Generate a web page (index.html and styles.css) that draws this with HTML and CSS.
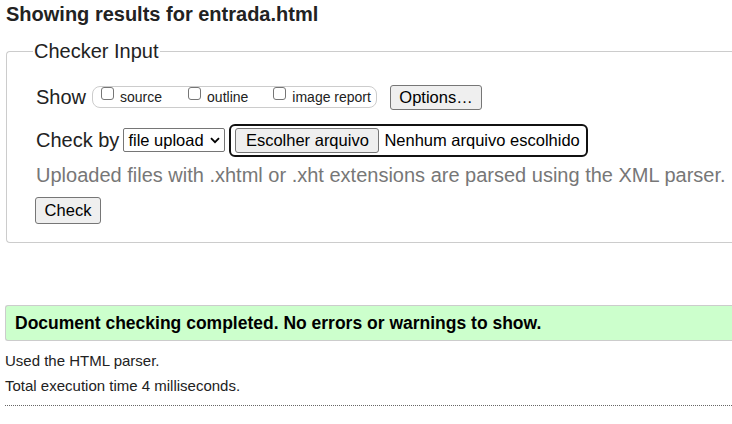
FILE: index.html
```html
<!DOCTYPE html>
<html lang="en">
<head>
<meta charset="utf-8">
<title>Showing results for entrada.html</title>
<link rel="stylesheet" href="styles.css">
</head>
<body>
<h2 class="title">Showing results for entrada.html</h2>
<fieldset class="checker">
  <legend class="legend">Checker Input</legend>
  <div class="row show-row">
    <span class="row-label">Show</span>
    <span class="opts">
      <label class="opt"><span class="cb"></span>source</label>
      <label class="opt"><span class="cb"></span>outline</label>
      <label class="opt"><span class="cb"></span>image report</label>
    </span>
    <button class="btn options">Options…</button>
  </div>
  <div class="row check-row">
    <span class="row-label">Check by</span>
    <span class="select">file upload<svg class="chev" width="10" height="7" viewBox="0 0 10 7"><path d="M1 1.2 L5 5.2 L9 1.2" fill="none" stroke="#000" stroke-width="1.8"/></svg></span>
    <span class="file">
      <button class="btn choose">Escolher arquivo</button>
      <span class="nofile">Nenhum arquivo escolhido</span>
    </span>
  </div>
  <p class="hint">Uploaded files with .xhtml or .xht extensions are parsed using the XML parser.</p>
  <div class="submit-row"><button class="btn submit">Check</button></div>
</fieldset>
<p class="success">Document checking completed. No errors or warnings to show.</p>
<p class="details">Used the HTML parser.</p>
<p class="details">Total execution time 4 milliseconds.</p>
<hr class="sep">
</body>
</html>
```
FILE: styles.css
```css
html, body {
  margin: 0;
  padding: 0;
  background: #fff;
  overflow: hidden;
}
body {
  font-family: "Liberation Sans", Arial, sans-serif;
  color: #222;
  padding: 0 0 0 6px;
}
.title {
  margin: 0;
  padding-top: 2px;
  font-size: 20px;
  line-height: 24px;
  font-weight: bold;
  color: #222;
}
.checker {
  margin: 13px 0 0 0;
  padding: 0 0 18px 29px;
  border: 1px solid #ccc;
  border-right: 0;
  border-radius: 4px 0 0 4px;
}
.legend {
  padding: 0 1px;
  margin-left: -3px;
  font-size: 20px;
  line-height: 24px;
  color: #222;
}
.row {
  display: flex;
  align-items: center;
}
.row-label {
  font-size: 20px;
  line-height: 24px;
  color: #222;
}
.show-row {
  margin-top: 21px;
  height: 26px;
}
.opts {
  display: flex;
  align-items: flex-start;
  margin-left: 6px;
  height: 22px;
  width: 285px;
  border: 1px solid #ccc;
  border-radius: 8px;
  box-sizing: border-box;
  padding-left: 8px;
}
.opt {
  display: flex;
  align-items: flex-start;
  white-space: nowrap;
  font-size: 14px;
  line-height: 20px;
  color: #222;
  margin-right: 26px;
}
.opt:nth-child(2) { margin-right: 25px; }
.cb {
  flex: none;
  width: 13px;
  height: 13px;
  box-sizing: border-box;
  border: 1px solid #767676;
  border-radius: 3px;
  margin: 0 6px 0 0;
  background: #fff;
}
.btn {
  font-family: "Liberation Sans", Arial, sans-serif;
  font-size: 16.5px;
  color: #000;
  background: #efefef;
  border: 1px solid #767676;
  border-radius: 3px;
  padding: 0 8px;
  height: 25px;
  line-height: 23px;
  box-sizing: border-box;
}
.options {
  margin-left: 13px;
  width: 92px;
}
.check-row {
  margin-top: 13px;
  height: 34px;
}
.select {
  display: flex;
  align-items: center;
  justify-content: space-between;
  margin-left: 4px;
  width: 102px;
  height: 24px;
  box-sizing: border-box;
  border: 1px solid #767676;
  border-radius: 2px;
  padding: 0 4px;
  font-size: 16.5px;
  color: #000;
  background: #fff;
}
.file {
  display: flex;
  align-items: center;
  margin-left: 4px;
  height: 33px;
  width: 359px;
  box-sizing: border-box;
  border: 2px solid #111;
  border-radius: 6px;
  padding-left: 4px;
}
.choose {
  width: 144px;
  height: 25px;
}
.nofile {
  margin-left: 5px;
  font-size: 16.5px;
  color: #000;
}
.hint {
  margin: 6px 0 0 0;
  font-size: 20px;
  line-height: 24px;
  color: #777;
  white-space: nowrap;
}
.submit-row {
  margin-top: 10px;
}
.submit {
  width: 66px;
  height: 27px;
  margin-left: -1px;
}
.success {
  margin: 62px 0 0 -1px;
  height: 36px;
  box-sizing: border-box;
  background: #ccffcc;
  border: 1px solid #ccc;
  border-right: 0;
  border-radius: 3px 0 0 3px;
  padding: 0 0 0 9px;
  font-size: 17.5px;
  font-weight: bold;
  line-height: 34px;
  color: #000;
}
.details {
  margin: 11px 0 0 -1px;
  font-size: 15px;
  line-height: 17px;
  color: #222;
}
.details + .details { margin-top: 8px; }
.sep {
  margin: 11px 0 0 -1px;
  border: 0;
  border-top: 1px dotted #666;
  height: 0;
}
```
